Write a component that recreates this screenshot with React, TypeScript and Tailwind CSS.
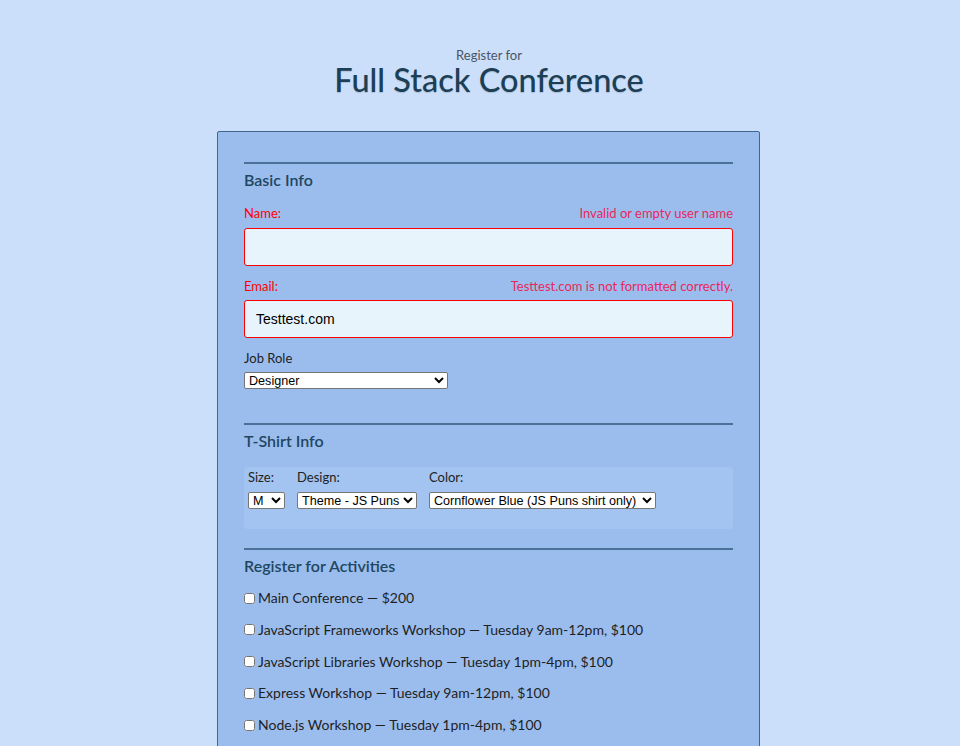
const activities = [
  'Main Conference — $200',
  'JavaScript Frameworks Workshop — Tuesday 9am-12pm, $100',
  'JavaScript Libraries Workshop — Tuesday 1pm-4pm, $100',
  'Express Workshop — Tuesday 9am-12pm, $100',
  'Node.js Workshop — Tuesday 1pm-4pm, $100',
];

function SectionTitle({ children }: { children: React.ReactNode }) {
  return (
    <>
      <div className="border-t-2 border-[#4a7198]" />
      <h2 className="mt-[6px] text-[16px] leading-[20px] font-semibold text-[#1f4760]">{children}</h2>
    </>
  );
}

const selectCls =
  'h-[17px] bg-white border border-[#767676] rounded-[2px] text-[12.6px] leading-[15px] text-black font-["Liberation_Sans",Arial,sans-serif]';

export default function App() {
  return (
    <main className="h-[746px] overflow-hidden bg-[#cbdffb] font-['Lato','Noto_Sans',sans-serif] text-[#222]">
      <header className="pt-[47px] pl-[18px] text-center">
        <p className="text-[13px] leading-[16px] text-[#4b5563]">Register for</p>
        <h1 className="-mt-[2px] text-[32.5px] leading-[38px] font-medium text-[#1c3f56] [text-shadow:0_1px_1px_rgba(0,0,0,0.15)]">
          Full Stack Conference
        </h1>
      </header>

      <form className="mt-[32px] ml-[217px] w-[543px] border border-[#41678f] rounded-[2px] bg-[#9bbdee] px-[26px] pt-[30px] pb-10">
        <SectionTitle>Basic Info</SectionTitle>

        <div className="mt-[15px] flex justify-between text-[13px] leading-[16px]">
          <label className="text-[#ff0000]">Name:</label>
          <span className="text-[#e8285a]">Invalid or empty user name</span>
        </div>
        <input
          type="text"
          className="mt-[7px] block w-full h-[38px] rounded-[3px] border border-[#ff0000] bg-[#e8f4fb] px-[11px] text-[14px] font-['Liberation_Sans',Arial,sans-serif] outline-none"
        />

        <div className="mt-[12px] flex justify-between text-[13px] leading-[16px]">
          <label className="text-[#ff0000]">Email:</label>
          <span className="text-[#e8285a]">Testtest.com is not formatted correctly.</span>
        </div>
        <input
          type="text"
          defaultValue="Testtest.com"
          className="mt-[6px] block w-full h-[38px] rounded-[3px] border border-[#ff0000] bg-[#e8f4fb] px-[11px] text-[14px] text-black font-['Liberation_Sans',Arial,sans-serif] outline-none"
        />

        <label className="mt-[12px] block text-[13px] leading-[16px]">Job Role</label>
        <select className={`${selectCls} mt-[6px] block w-[204px]`} defaultValue="designer">
          <option value="designer">Designer</option>
        </select>

        <div className="mt-[34px]">
          <SectionTitle>T-Shirt Info</SectionTitle>
        </div>
        <div className="mt-[16px] rounded-[4px] bg-[#a3c4f1] pl-[4px] pt-[2px] pb-[20px] flex items-start gap-[12px] text-[13px] leading-[16px]">
          <div className="flex flex-col items-start gap-[7px]">
            <span>Size:</span>
            <select className={`${selectCls} w-[37px]`} defaultValue="M">
              <option>S</option>
              <option>M</option>
              <option>L</option>
            </select>
          </div>
          <div className="flex flex-col items-start gap-[7px]">
            <span>Design:</span>
            <select className={`${selectCls} w-[120px]`}>
              <option>Theme - JS Puns</option>
            </select>
          </div>
          <div className="flex flex-col items-start gap-[7px]">
            <span>Color:</span>
            <select className={`${selectCls} w-[227px]`}>
              <option>Cornflower Blue (JS Puns shirt only)</option>
            </select>
          </div>
        </div>

        <div className="mt-[19px]">
          <SectionTitle>Register for Activities</SectionTitle>
        </div>
        <div className="mt-[13px] flex flex-col gap-[13.75px]">
          {activities.map((a) => (
            <label key={a} className="flex items-center gap-[3px] text-[14px] leading-[18px] text-[#1f1f1f]">
              <input type="checkbox" className="m-0 w-[11px] h-[11px]" />
              {a}
            </label>
          ))}
        </div>
      </form>
    </main>
  );
}
